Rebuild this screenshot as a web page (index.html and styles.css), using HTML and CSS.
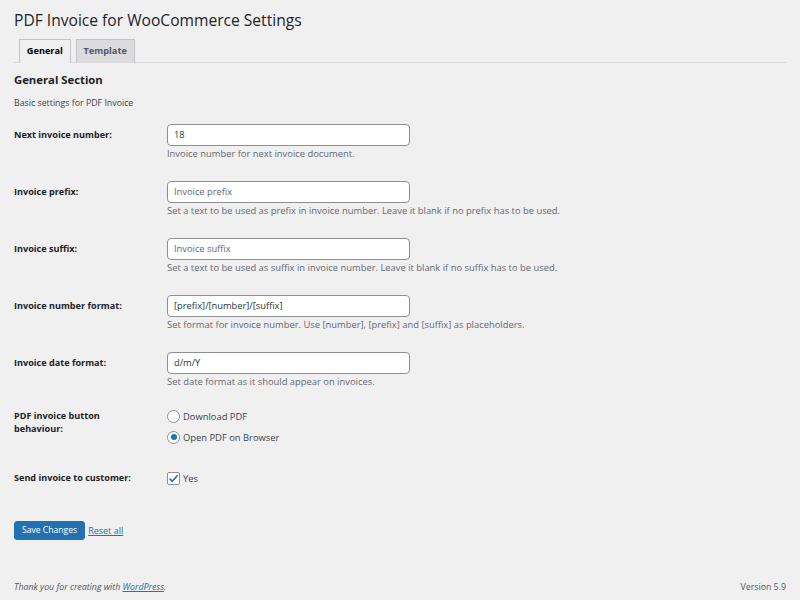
FILE: index.html
```html
<!DOCTYPE html>
<html>
<head>
<meta charset="utf-8">
<link rel="stylesheet" href="styles.css">
</head>
<body>
<div class="page">
  <div class="wrap">
    <h1 class="title">PDF Invoice for WooCommerce Settings</h1>
    <nav class="tabs">
      <a class="tab active">General</a>
      <a class="tab">Template</a>
    </nav>
    <h2 class="section-title">General Section</h2>
    <p class="section-desc">Basic settings for PDF Invoice</p>

    <div class="rows">
      <div class="row">
        <div class="label">Next invoice number:</div>
        <div class="field">
          <div class="input">18</div>
          <div class="desc">Invoice number for next invoice document.</div>
        </div>
      </div>
      <div class="row">
        <div class="label">Invoice prefix:</div>
        <div class="field">
          <div class="input placeholder">Invoice prefix</div>
          <div class="desc">Set a text to be used as prefix in invoice number. Leave it blank if no prefix has to be used.</div>
        </div>
      </div>
      <div class="row">
        <div class="label">Invoice suffix:</div>
        <div class="field">
          <div class="input placeholder">Invoice suffix</div>
          <div class="desc">Set a text to be used as suffix in invoice number. Leave it blank if no suffix has to be used.</div>
        </div>
      </div>
      <div class="row">
        <div class="label">Invoice number format:</div>
        <div class="field">
          <div class="input">[prefix]/[number]/[suffix]</div>
          <div class="desc">Set format for invoice number. Use [number], [prefix] and [suffix] as placeholders.</div>
        </div>
      </div>
      <div class="row">
        <div class="label">Invoice date format:</div>
        <div class="field">
          <div class="input">d/m/Y</div>
          <div class="desc">Set date format as it should appear on invoices.</div>
        </div>
      </div>
      <div class="row row-radio">
        <div class="label label-multi">PDF invoice button<br>behaviour:</div>
        <div class="field radios">
          <div class="choice"><span class="radio"></span><span>Download PDF</span></div>
          <div class="choice"><span class="radio checked"></span><span>Open PDF on Browser</span></div>
        </div>
      </div>
      <div class="row row-check">
        <div class="label">Send invoice to customer:</div>
        <div class="field">
          <div class="choice"><span class="checkbox"><svg viewBox="0 0 13 13" width="13" height="13"><path d="M2.6 6.6 L5.3 9.3 L10.6 3.2" fill="none" stroke="#2271b1" stroke-width="1.6"/></svg></span><span>Yes</span></div>
        </div>
      </div>
    </div>

    <div class="actions">
      <button class="button-primary">Save Changes</button>
      <a class="reset">Reset all</a>
    </div>
  </div>
  <footer class="footer">
    <span class="thanks">Thank you for creating with <a class="wp-link">WordPress</a>.</span>
    <span class="version">Version 5.9</span>
  </footer>
</div>
</body>
</html>
```
FILE: styles.css
```css
* { box-sizing: border-box; }
html, body { margin: 0; padding: 0; }
body {
  background: #f0f0f1;
  color: #1d2327;
  font-family: "Open Sans", "Noto Sans", sans-serif;
}
.page {
  min-height: 600px;
  display: flex;
  flex-direction: column;
}
.wrap {
  padding: 0 14px;
  flex: 1;
}
.title {
  margin: 0;
  padding-top: 9px;
  font-size: 15.6px;
  font-weight: 400;
  line-height: 22px;
  color: #1d2327;
}
.tabs {
  margin-top: 8px;
  padding-left: 5px;
  display: flex;
  gap: 5px;
  border-bottom: 1px solid #dcdcde;
  height: 24px;
}
.tab {
  display: block;
  height: 24px;
  padding: 0 6.8px;
  border: 1px solid #c3c4c7;
  border-bottom: none;
  background: #dcdcde;
  color: #50575e;
  font-size: 9.2px;
  font-weight: 700;
  line-height: 22px;
}
.tab.active {
  background: #f0f0f1;
  color: #000;
  height: 24px;
  margin-bottom: -1px;
}
.section-title {
  margin: 8px 0 0;
  font-size: 11.3px;
  font-weight: 700;
  line-height: 18px;
}
.section-desc {
  margin: 7px 0 0;
  font-size: 8.8px;
  line-height: 14px;
  color: #3c434a;
}
.rows {
  margin-top: 14px;
}
.row {
  display: grid;
  grid-template-columns: 153px 1fr;
  margin-bottom: 20px;
}
.label {
  font-size: 9.1px;
  font-weight: 700;
  line-height: 22px;
}
.label-multi {
  line-height: 13px;
  padding-top: 0;
}
.input {
  width: 243px;
  height: 22px;
  border: 1px solid #8c8f94;
  border-radius: 4px;
  background: #fff;
  font-size: 9.3px;
  line-height: 20px;
  padding: 0 6px;
  color: #2c3338;
}
.input.placeholder { color: #646970; }
.desc {
  margin-top: 1px;
  font-size: 9.4px;
  line-height: 14px;
  color: #646970;
}
.radios {
  display: flex;
  flex-direction: column;
  gap: 7px;
}
.choice {
  display: flex;
  align-items: center;
  gap: 3px;
  height: 14px;
  font-size: 9.4px;
  color: #3c434a;
}
.radio {
  width: 13px;
  height: 13px;
  border: 1px solid #8c8f94;
  border-radius: 50%;
  background: #fff;
  display: flex;
  align-items: center;
  justify-content: center;
}
.radio.checked::before {
  content: "";
  width: 6px;
  height: 6px;
  border-radius: 50%;
  background: #2271b1;
}
.checkbox {
  width: 13px;
  height: 13px;
  border: 1px solid #8c8f94;
  border-radius: 2px;
  background: #fff;
  position: relative;
}
.checkbox svg {
  position: absolute;
  left: -1px;
  top: -1px;
}
.row-radio { margin-top: 0; margin-bottom: 27px; }
.row-check .label { line-height: 14px; }
.actions {
  margin-top: 36px;
  display: flex;
  align-items: center;
  gap: 3px;
}
.button-primary {
  height: 19px;
  padding: 0 7px;
  border: 1px solid #2271b1;
  border-radius: 3px;
  background: #2271b1;
  color: #fff;
  font-family: inherit;
  font-size: 8.6px;
  line-height: 17px;
}
.reset {
  color: #2271b1;
  font-size: 9px;
  text-decoration: underline;
}
.footer {
  display: flex;
  justify-content: space-between;
  padding: 0 14px 6px;
  font-size: 8.8px;
  line-height: 14px;
  color: #50575e;
}
.thanks { font-style: italic; }
.wp-link { color: #2271b1; text-decoration: underline; }
```
